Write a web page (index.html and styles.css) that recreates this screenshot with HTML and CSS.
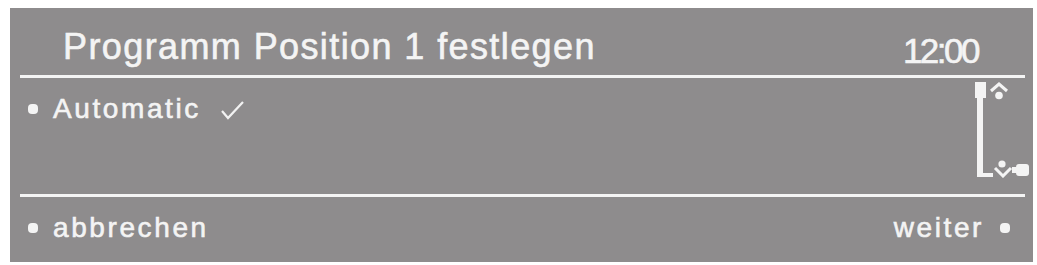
FILE: index.html
```html
<!DOCTYPE html>
<html lang="de">
<head>
<meta charset="utf-8">
<title>Programm Position 1 festlegen</title>
<link rel="stylesheet" href="styles.css">
</head>
<body>
<div class="screen">
  <div class="header">
    <div class="title">Programm Position 1 festlegen</div>
    <div class="clock">12:00</div>
  </div>
  <div class="rule"></div>
  <div class="content">
    <div class="item">
      <span class="dot"></span>
      <span class="label">Automatic</span>
      <svg class="check" width="24" height="20" viewBox="0 0 24 20"><polyline points="1,11 7,18 22,2" fill="none" stroke="#f2f2f2" stroke-width="2.2"/></svg>
    </div>
    <svg class="scroll" width="57" height="96" viewBox="0 0 57 96">
      <rect x="0" y="0" width="11" height="16" fill="#f4f4f4"/>
      <rect x="2" y="0" width="6" height="95" fill="#f4f4f4"/>
      <rect x="2" y="91" width="16" height="4" fill="#f4f4f4"/>
      <polyline points="16,9 24,2 32,9" fill="none" stroke="#f4f4f4" stroke-width="3"/>
      <circle cx="24" cy="13.5" r="3.8" fill="#f4f4f4"/>
      <circle cx="27" cy="82" r="3.6" fill="#f4f4f4"/>
      <polyline points="20,86 28,94 36,86" fill="none" stroke="#f4f4f4" stroke-width="3"/>
      <rect x="41" y="82" width="13" height="12" rx="3" fill="#f4f4f4"/>
      <rect x="37" y="85" width="6" height="6" fill="#f4f4f4"/>
    </svg>
  </div>
  <div class="rule"></div>
  <div class="footer">
    <div class="action"><span class="dot"></span><span class="label">abbrechen</span></div>
    <div class="action"><span class="label">weiter</span><span class="dot"></span></div>
  </div>
</div>
</body>
</html>
```

FILE: styles.css
```css
html, body {
  margin: 0;
  padding: 0;
  background: #ffffff;
}

body {
  font-family: "Liberation Sans", Arial, sans-serif;
  color: #f4f4f4;
  -webkit-text-stroke: 0.6px #f4f4f4;
}

.screen {
  margin: 8px 0 0 10px;
  width: 1023px;
  height: 254px;
  background: #8e8c8d;
  display: flex;
  flex-direction: column;
}

.header {
  height: 67px;
  display: flex;
  justify-content: space-between;
  align-items: flex-start;
  padding: 0 55px 0 53px;
}

.title {
  margin-top: 21px;
  font-size: 36px;
  line-height: 36px;
  letter-spacing: 1.4px;
}

.clock {
  margin-top: 25px;
  font-size: 35px;
  line-height: 35px;
  letter-spacing: -2.5px;
}

.rule {
  height: 3px;
  margin: 0 8px 0 10px;
  background: #f4f4f4;
}

.content {
  height: 116px;
  display: flex;
  justify-content: space-between;
  align-items: flex-start;
  padding-left: 18px;
}

.item {
  margin-top: 17px;
  display: flex;
  align-items: center;
  height: 28px;
  font-size: 28px;
  line-height: 28px;
  letter-spacing: 2.6px;
}

.dot {
  width: 10px;
  height: 10px;
  border-radius: 4px;
  background: #f4f4f4;
  flex: none;
}

.item .dot {
  margin-right: 15px;
}

.check {
  margin-left: 20px;
  margin-top: 2px;
}

.scroll {
  margin-top: 4px;
  margin-right: 1px;
  flex: none;
}

.footer {
  flex: 1;
  display: flex;
  justify-content: space-between;
  align-items: flex-start;
  padding: 0 23px 0 18px;
}

.action {
  margin-top: 17px;
  display: flex;
  align-items: center;
  height: 28px;
  font-size: 28px;
  line-height: 28px;
  letter-spacing: 2.6px;
}

.action .dot:first-child {
  margin-right: 15px;
}

.action .dot:last-child {
  margin-left: 16px;
}
```
